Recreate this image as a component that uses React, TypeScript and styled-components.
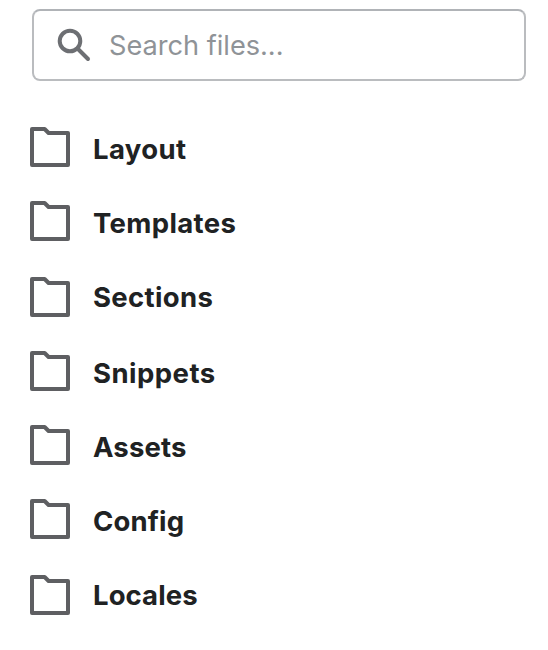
import React from "react";
import styled, { createGlobalStyle } from "styled-components";

const GlobalStyle = createGlobalStyle`
  * { box-sizing: border-box; }
  body { margin: 0; background: #fff; font-family: Inter, "Liberation Sans", sans-serif; }
`;

const Sidebar = styled.main`
  width: 548px;
  height: 650px;
  padding: 9px 22px 0 32px;
  overflow: hidden;
`;

const SearchField = styled.label`
  display: flex;
  align-items: center;
  height: 72px;
  padding-left: 23px;
  border: 2px solid #babcbf;
  border-top-color: #b0b3b7;
  border-radius: 8px;
`;

const SearchIcon = styled.svg`
  width: 34px;
  height: 34px;
  flex: none;
  margin-right: 18px;
`;

const SearchInput = styled.input`
  flex: 1;
  min-width: 0;
  border: 0;
  outline: 0;
  padding: 1px 0 0;
  background: transparent;
  font: 400 27.2px/36px Inter, "Liberation Sans", sans-serif;
  letter-spacing: -0.02px;
  &::placeholder { color: #8f9397; opacity: 1; }
`;

const FolderList = styled.ul`
  margin: 46px 0 0 -2px;
  padding: 0;
  list-style: none;
`;

const FolderRow = styled.li<{ $height: number }>`
  display: flex;
  align-items: flex-start;
  height: ${({ $height }) => $height}px;
`;

const FolderIcon = styled.svg`
  width: 40px;
  height: 40px;
  flex: none;
`;

const FolderName = styled.span<{ $top: number; $tracking: number }>`
  margin: ${({ $top }) => $top}px 0 0 23px;
  color: #202223;
  font-size: 27.5px;
  font-weight: 650;
  line-height: 36px;
  letter-spacing: ${({ $tracking }) => $tracking}px;
`;

const folders = [
  { name: "Layout", height: 74, top: 4, tracking: 0.4 },
  { name: "Templates", height: 76, top: 4, tracking: 0.36 },
  { name: "Sections", height: 74, top: 2, tracking: 0.33 },
  { name: "Snippets", height: 74, top: 4, tracking: 0.46 },
  { name: "Assets", height: 74, top: 4, tracking: 0.15 },
  { name: "Config", height: 76, top: 4, tracking: 0.15 },
  { name: "Locales", height: 74, top: 2, tracking: 0.08 },
];

export default function App() {
  return (
    <>
      <GlobalStyle />
      <Sidebar>
        <SearchField>
          <SearchIcon viewBox="0 0 34 34" fill="none" stroke="#6d6f73" strokeWidth="4" strokeLinecap="round">
            <circle cx="13" cy="13" r="10.3" />
            <path d="m20.5 20.5 10.5 10.5" />
          </SearchIcon>
          <SearchInput placeholder="Search files..." />
        </SearchField>
        <FolderList>
          {folders.map(({ name, height, top, tracking }) => (
            <FolderRow key={name} $height={height}>
              <FolderIcon viewBox="0 0 40 40">
                <path
                  d="M2 2h12.6l4 4H38v32H2Z"
                  fill="none"
                  stroke="#5e5f62"
                  strokeWidth="4"
                  strokeLinejoin="round"
                />
              </FolderIcon>
              <FolderName $top={top} $tracking={tracking}>{name}</FolderName>
            </FolderRow>
          ))}
        </FolderList>
      </Sidebar>
    </>
  );
}
